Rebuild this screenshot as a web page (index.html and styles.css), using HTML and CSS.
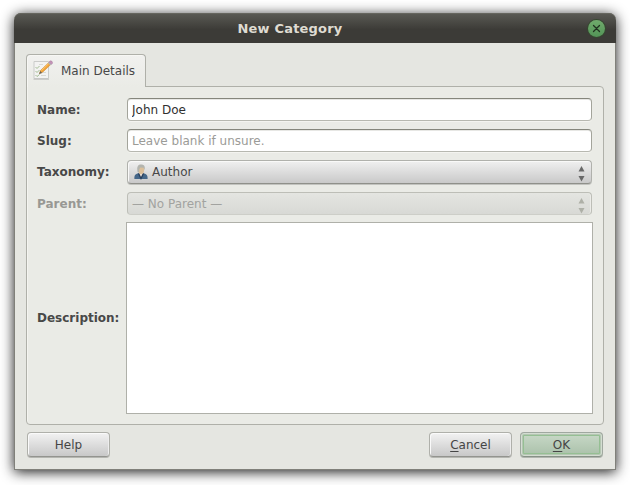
FILE: index.html
```html
<!DOCTYPE html>
<html lang="en">
<head>
<meta charset="utf-8">
<title>New Category</title>
<link rel="stylesheet" href="styles.css">
</head>
<body>
<div class="window">
  <header class="titlebar">
    <h1 class="title">New Category</h1>
    <button class="close" aria-label="Close"><svg width="17" height="17" viewBox="0 0 17 17"><path d="M5.500 5.500l6 6M11.500 5.500l-6 6" stroke="#20301f" stroke-width="1.300" stroke-linecap="round"/></svg></button>
  </header>
  <main class="content">
    <div class="tab">
      <svg class="tab-icon" width="22" height="22" viewBox="0 0 22 22" fill="none">
        <path d="M2 2.500h14.500v17H2z" fill="#f3f3f2" stroke="#cbccca"/>
        <path d="M1.500 20.300h15.500" stroke="#aaa" stroke-opacity=".6"/>
        <path d="M3.500 8l1.500 1.500L7.500 7M3.500 12l1.500 1.500L7.500 11M3.500 16l1.500 1.500L7.500 15.500" stroke="#a3bd93"/>
        <path d="M9 16.500h5M10 13.500h4M7 5.500h4" stroke="#d8dad6"/>
        <path d="M7.500 14.500l1.200-3.200L16.500 3.800l2 1.900-7.600 7.300z" fill="#f2a43a" stroke="#c8842e" stroke-width=".5"/>
        <path d="M9.500 11.500l7.300-7" stroke="#ffd078" stroke-width=".8"/>
        <path d="M7 15l1.200-3 2 1.900z" fill="#6c6254"/>
        <path d="M16 4l1-1 2.300 2.300-1 1z" fill="#aeb3b8"/>
        <path d="M17 3l.9-.9c1.300-.9 3.200.9 2.500 2.300l-.9 1z" fill="#c493b7" stroke="#a77ba0" stroke-width=".5"/>
      </svg>
      <span>Main Details</span>
    </div>
    <form class="panel">
      <label class="label" for="name">Name:</label>
      <input class="field" id="name" value="John Doe">
      <label class="label" for="slug">Slug:</label>
      <input class="field" id="slug" placeholder="Leave blank if unsure.">
      <span class="label">Taxonomy:</span>
      <div class="combo">
        <svg class="person" width="14" height="16" viewBox="0 0 14 16">
          <path d="M.4 15c-.3-3.500.8-5.200 4-5.800h5.200c3 .6 4.300 2.300 4 5.800z" fill="#456789"/>
          <path d="M4.500 9.200L7 14l2.500-4.800z" fill="#e9ddcf"/>
          <path d="M4.500 9.400L7 14.500l2.500-5.100" fill="none" stroke="#29405e" stroke-width="1.300"/>
          <ellipse cx="7.200" cy="5.800" rx="3" ry="4.200" fill="#dcc09b"/>
          <path d="M3.600 8C2.600 3 3.700.5 7 .5s4.500 2.200 3.500 5.500L9.600 3.800 6.300 3.500 5.200 5.500 5 8.500z" fill="#b3b4ae"/>
        </svg>
        <span class="combo-text">Author</span>
        <svg class="arrows" width="7" height="17" viewBox="0 0 7 17"><path d="M.500 6.500L3.500 1l3 5.500zM.500 11h6l-3 5.500z"/></svg>
      </div>
      <span class="label off">Parent:</span>
      <div class="combo disabled">
        <span class="combo-text">— No Parent —</span>
        <svg class="arrows" width="7" height="17" viewBox="0 0 7 17"><path d="M.500 6.500L3.500 1l3 5.500zM.500 11h6l-3 5.500z"/></svg>
      </div>
      <label class="label tall" for="description">Description:</label>
      <textarea class="area" id="description"></textarea>
    </form>
    <footer class="actions">
      <button class="button help">Help</button>
      <button class="button"><span class="key">C</span>ancel</button>
      <button class="button ok"><span class="key">O</span>K</button>
    </footer>
  </main>
</div>
</body>
</html>
```
FILE: styles.css
```css
* { box-sizing: border-box; }
body {
  margin: 0;
  padding: 13px 14px;
  width: 630px;
  height: 485px;
  overflow: hidden;
  background: #fff;
  color: #484848;
  font: 12px/14px "DejaVu Sans", sans-serif;
}
.window {
  width: 602px;
  height: 457px;
  border-radius: 7px 7px 0 0;
  background: #e5e6e1;
  box-shadow: 0 2px 13px rgba(0, 0, 0, .9);
  display: flex;
  flex-direction: column;
}
.titlebar {
  height: 30px;
  flex: none;
  display: grid;
  grid-template-columns: 28px 1fr 28px;
  align-items: center;
  border-radius: 7px 7px 0 0;
  background: linear-gradient(#5b5b55, #3c3b37 55%, #3c3b37);
  box-shadow: inset 0 1px #66665f;
}
.title {
  grid-column: 2;
  margin: 2px 0 0;
  padding-right: 50px;
  text-align: center;
  font-size: 13px;
  line-height: 16px;
  letter-spacing: .2px;
  color: #dfdbd2;
}
.close {
  width: 17px;
  height: 17px;
  padding: 0;
  border: 0;
  border-radius: 50%;
  background: linear-gradient(#70aa6c, #539457);
  box-shadow: 0 0 0 1px #35482f;
}
.close svg { display: block; }
.content {
  flex: 1;
  padding: 11px 12px 11px 11px;
  border: 1px solid #80807a;
  border-top: 0;
}
.tab {
  position: relative;
  width: 120px;
  height: 33px;
  display: flex;
  align-items: center;
  gap: 7px;
  padding: 0 0 1px 5px;
  border: 1px solid #afb0a9;
  border-bottom: 0;
  border-radius: 4px 4px 0 0;
  background: linear-gradient(#f1f1ef, #eaebe6);
  box-shadow: inset 1px 1px #f7f7f4;
}
.tab-icon { margin-bottom: 2px; }
.panel {
  width: 578px;
  height: 339px;
  margin-top: -1px;
  padding: 11px 10px;
  display: grid;
  grid-template-columns: 89px 467px;
  grid-template-rows: 23px 23px 24px 23px 191px;
  row-gap: 8px;
  align-items: center;
  border: 1px solid #afb0a9;
  border-radius: 0 4px 4px 4px;
  background: #eaebe6;
  box-shadow: inset 1px 0 #f4f4f0;
}
.label { font-weight: bold; }
.off { color: #989894; }
.tall { padding-bottom: 2px; }
.field {
  width: 465px;
  height: 23px;
  margin: 0 0 0 1px;
  padding: 0 4px;
  outline: 0;
  border: 1px solid #a3a49b;
  border-top-color: #85867c;
  border-bottom-color: #b7b8b0;
  border-radius: 4px;
  background: #fff;
  box-shadow: inset 0 1px #e7e7e4, 0 1px #f4f4f0;
  color: #303030;
  font: inherit;
}
.field::placeholder { color: #9b9b97; opacity: 1; }
.combo {
  width: 465px;
  height: 24px;
  margin-left: 1px;
  display: flex;
  align-items: center;
  padding: 0 6px 0;
  border: 1px solid #b0b1ac;
  border-bottom-color: #8f908a;
  border-radius: 4px;
  background: linear-gradient(#f0f0f0, #c9c9c9);
  box-shadow: inset 1px 1px #f9f9f8, 0 1px #c2c3bf;
}
.person { margin-right: 4px; }
.arrows { margin: 3px 0 0 auto; fill: #686868; }
.disabled {
  height: 23px;
  padding: 0 6px 0 4px;
  border: 1px solid #bdbeb7;
  border-bottom-color: #cdcec8;
  background: linear-gradient(#e4e5e1, #d8d9d5);
  box-shadow: inset -1px 0 #ecece8;
  color: #a2a3a0;
}
.disabled .arrows { fill: #aeb0a7; }
.area {
  width: 467px;
  height: 192px;
  margin: -1px 0 0;
  resize: none;
  outline: 0;
  border: 1px solid #afb0a9;
  background: #fff;
}
.actions {
  display: flex;
  gap: 8px;
  padding: 7px 0 0 1px;
}
.button {
  width: 83px;
  height: 25px;
  padding: 0;
  border: 1px solid #afb0aa;
  border-bottom-color: #93948f;
  border-radius: 4px;
  background: linear-gradient(#f2f2f2, #c8c8c8);
  box-shadow: inset 1px 1px #fafafa, inset -1px 0 #ededed, 0 1px #b5b6b1;
  color: #454545;
  font: inherit;
}
.help { margin-right: auto; }
.key { text-decoration: underline; text-underline-offset: 2px; }
.ok {
  border-color: #a0a8a0;
  border-bottom-color: #879187;
  background: linear-gradient(#c9d9c8, #a9c0a9);
  box-shadow: inset 0 0 0 1px #d3ddd1, inset 0 0 0 2px #b4c6b2, inset 0 0 0 3px #95bf93, 0 1px #b0b5ae;
}
```
